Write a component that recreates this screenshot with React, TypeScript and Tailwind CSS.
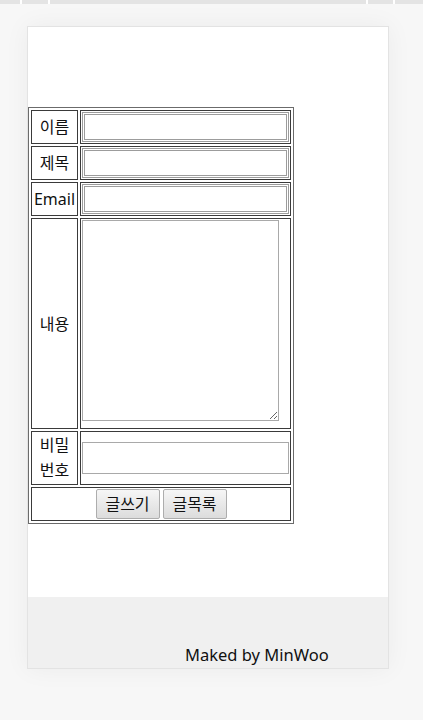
import React from 'react';

const font = { fontFamily: '"Noto Sans", "Noto Sans CJK KR", sans-serif' };

export default function App() {
  return (
    <div className="min-h-[720px] bg-[#f7f7f7] text-[#111]" style={font}>
      {/* top strip */}
      <div className="flex h-[4px] gap-[2px] bg-white">
        <div className="w-[20px] bg-[#e4e4e4]" />
        <div className="w-[26px] bg-[#e4e4e4]" />
        <div className="w-[316px] bg-[#e4e4e4]" />
        <div className="w-[25px] bg-[#e4e4e4]" />
        <div className="flex-1 bg-[#e4e4e4]" />
      </div>

      {/* card */}
      <div className="ml-[27px] mt-[22px] w-[362px] border border-[#e3e3e3] bg-white shadow-[0_0_24px_rgba(0,0,0,0.05)]">
        <div className="pt-[80px] pb-[73px]">
          <table className="border-separate border-spacing-[2px] border border-[#6b6b6b] text-[16px]">
            <tbody>
              <tr>
                <td className="h-[34px] w-[47px] border border-[#3a3a3a] p-px text-center">이름</td>
                <td className="h-[34px] border border-[#3a3a3a] p-px">
                  <input className="block h-[30px] w-[207px] border-[3px] border-double border-[#9c9c9c] bg-white" />
                </td>
              </tr>
              <tr>
                <td className="h-[34px] border border-[#3a3a3a] p-px text-center">제목</td>
                <td className="h-[34px] border border-[#3a3a3a] p-px">
                  <input className="block h-[30px] w-[207px] border-[3px] border-double border-[#9c9c9c] bg-white" />
                </td>
              </tr>
              <tr>
                <td className="h-[34px] border border-[#3a3a3a] p-px text-center">Email</td>
                <td className="h-[34px] border border-[#3a3a3a] p-px">
                  <input className="block h-[30px] w-[207px] border-[3px] border-double border-[#9c9c9c] bg-white" />
                </td>
              </tr>
              <tr>
                <td className="h-[211px] border border-[#3a3a3a] p-px text-center">내용</td>
                <td className="h-[211px] border border-[#3a3a3a] p-px align-top">
                  <textarea className="block h-[201px] w-[197px] resize border border-[#a9a9a9] bg-white" />
                </td>
              </tr>
              <tr>
                <td className="h-[52px] border border-[#3a3a3a] p-px text-center leading-[25px]">
                  비밀
                  <br />
                  번호
                </td>
                <td className="h-[52px] border border-[#3a3a3a] p-px">
                  <input type="password" className="block h-[32px] w-[207px] border border-[#a9a9a9] bg-white" />
                </td>
              </tr>
              <tr>
                <td colSpan={2} className="h-[34px] border border-[#3a3a3a] p-px">
                  <div className="flex justify-center gap-[3px]">
                    <button className="h-[30px] w-[64px] rounded-[2px] border border-[#adadad] bg-gradient-to-b from-[#f6f6f6] to-[#dcdcdc] text-[16px]">
                      글쓰기
                    </button>
                    <button className="h-[30px] w-[64px] rounded-[2px] border border-[#adadad] bg-gradient-to-b from-[#f6f6f6] to-[#dcdcdc] text-[16px]">
                      글목록
                    </button>
                  </div>
                </td>
              </tr>
            </tbody>
          </table>
        </div>

        {/* footer */}
        <div className="h-[71px] bg-[#f0f0f0] pl-[157px] pt-[46px] text-[16.5px] leading-6 text-[#111]">
          Maked by MinWoo
        </div>
      </div>
    </div>
  );
}
